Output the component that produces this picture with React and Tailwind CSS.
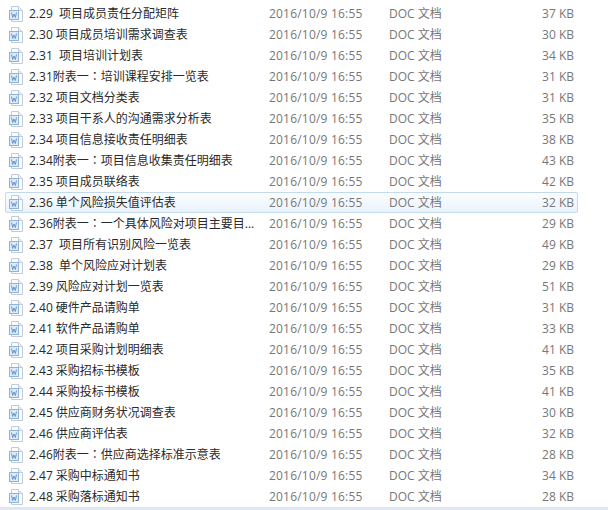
const files = [
  ['2.29  项目成员责任分配矩阵', '37 KB'],
  ['2.30 项目成员培训需求调查表', '30 KB'],
  ['2.31  项目培训计划表', '34 KB'],
  ['2.31附表一：培训课程安排一览表', '31 KB'],
  ['2.32 项目文档分类表', '31 KB'],
  ['2.33 项目干系人的沟通需求分析表', '35 KB'],
  ['2.34 项目信息接收责任明细表', '38 KB'],
  ['2.34附表一：项目信息收集责任明细表', '43 KB'],
  ['2.35 项目成员联络表', '42 KB'],
  ['2.36 单个风险损失值评估表', '32 KB'],
  ['2.36附表一：一个具体风险对项目主要目...', '29 KB'],
  ['2.37  项目所有识别风险一览表', '49 KB'],
  ['2.38  单个风险应对计划表', '29 KB'],
  ['2.39 风险应对计划一览表', '51 KB'],
  ['2.40 硬件产品请购单', '31 KB'],
  ['2.41 软件产品请购单', '33 KB'],
  ['2.42 项目采购计划明细表', '41 KB'],
  ['2.43 采购招标书模板', '35 KB'],
  ['2.44 采购投标书模板', '41 KB'],
  ['2.45 供应商财务状况调查表', '30 KB'],
  ['2.46 供应商评估表', '32 KB'],
  ['2.46附表一：供应商选择标准示意表', '28 KB'],
  ['2.47 采购中标通知书', '34 KB'],
  ['2.48 采购落标通知书', '28 KB'],
]

function DocIcon() {
  return (
    <svg width="16" height="16" viewBox="0 0 16 16" className="shrink-0">
      <path d="M3.5 0.5H10.5L14.5 4.5V15.5H3.5Z" fill="#fbfcfd" stroke="#c3ccd6" />
      <path d="M10.5 0.5V4.5H14.5" fill="#e9edf2" stroke="#c3ccd6" />
      <rect x="1.5" y="4.5" width="9" height="9" fill="#dfeaf7" stroke="#8db4de" />
      <path d="M3.5 6.5L4.7 11.5L6 8L7.3 11.5L8.5 6.5" fill="none" stroke="#5b8fcb" strokeWidth="0.9" />
    </svg>
  )
}

// the full-width colon sits centred in the reference, which is how the TC font draws it
function FileName({ name }) {
  const [before, after] = name.split('：')
  if (after === undefined) return name
  return (
    <>
      {before}
      <span className="font-['Noto_Sans_CJK_TC',sans-serif]">：</span>
      {after}
    </>
  )
}

export default function App() {
  return (
    <main className="w-[608px] h-[510px] overflow-hidden bg-white pt-[3px] font-['Open_Sans','Noto_Sans_CJK_SC',sans-serif] text-[12px]">
      {files.map(([name, size], i) => (
        <div
          key={name}
          className={`ml-[5px] w-[573px] h-[21px] flex items-center rounded-[2px] border ${
            i === 9
              ? 'border-[#c3d9ee] bg-gradient-to-b from-[#fbfdff] to-[#e9f3fc]'
              : 'border-transparent'
          }`}
        >
          <div className="ml-[2px] w-[21px] flex shrink-0">
            <DocIcon />
          </div>
          <span className="w-[240px] shrink-0 whitespace-pre text-[#2a2a2a]">
            <FileName name={name} />
          </span>
          <span className="w-[120px] shrink-0 tracking-[0.2px] text-[#777777]">2016/10/9 16:55</span>
          <span className="w-[100px] shrink-0 text-[#777777]">DOC 文档</span>
          <span className="w-[85px] text-right text-[#777777]">{size}</span>
        </div>
      ))}
      <div className="h-[3px] bg-[#dfe7f3]" />
    </main>
  )
}
